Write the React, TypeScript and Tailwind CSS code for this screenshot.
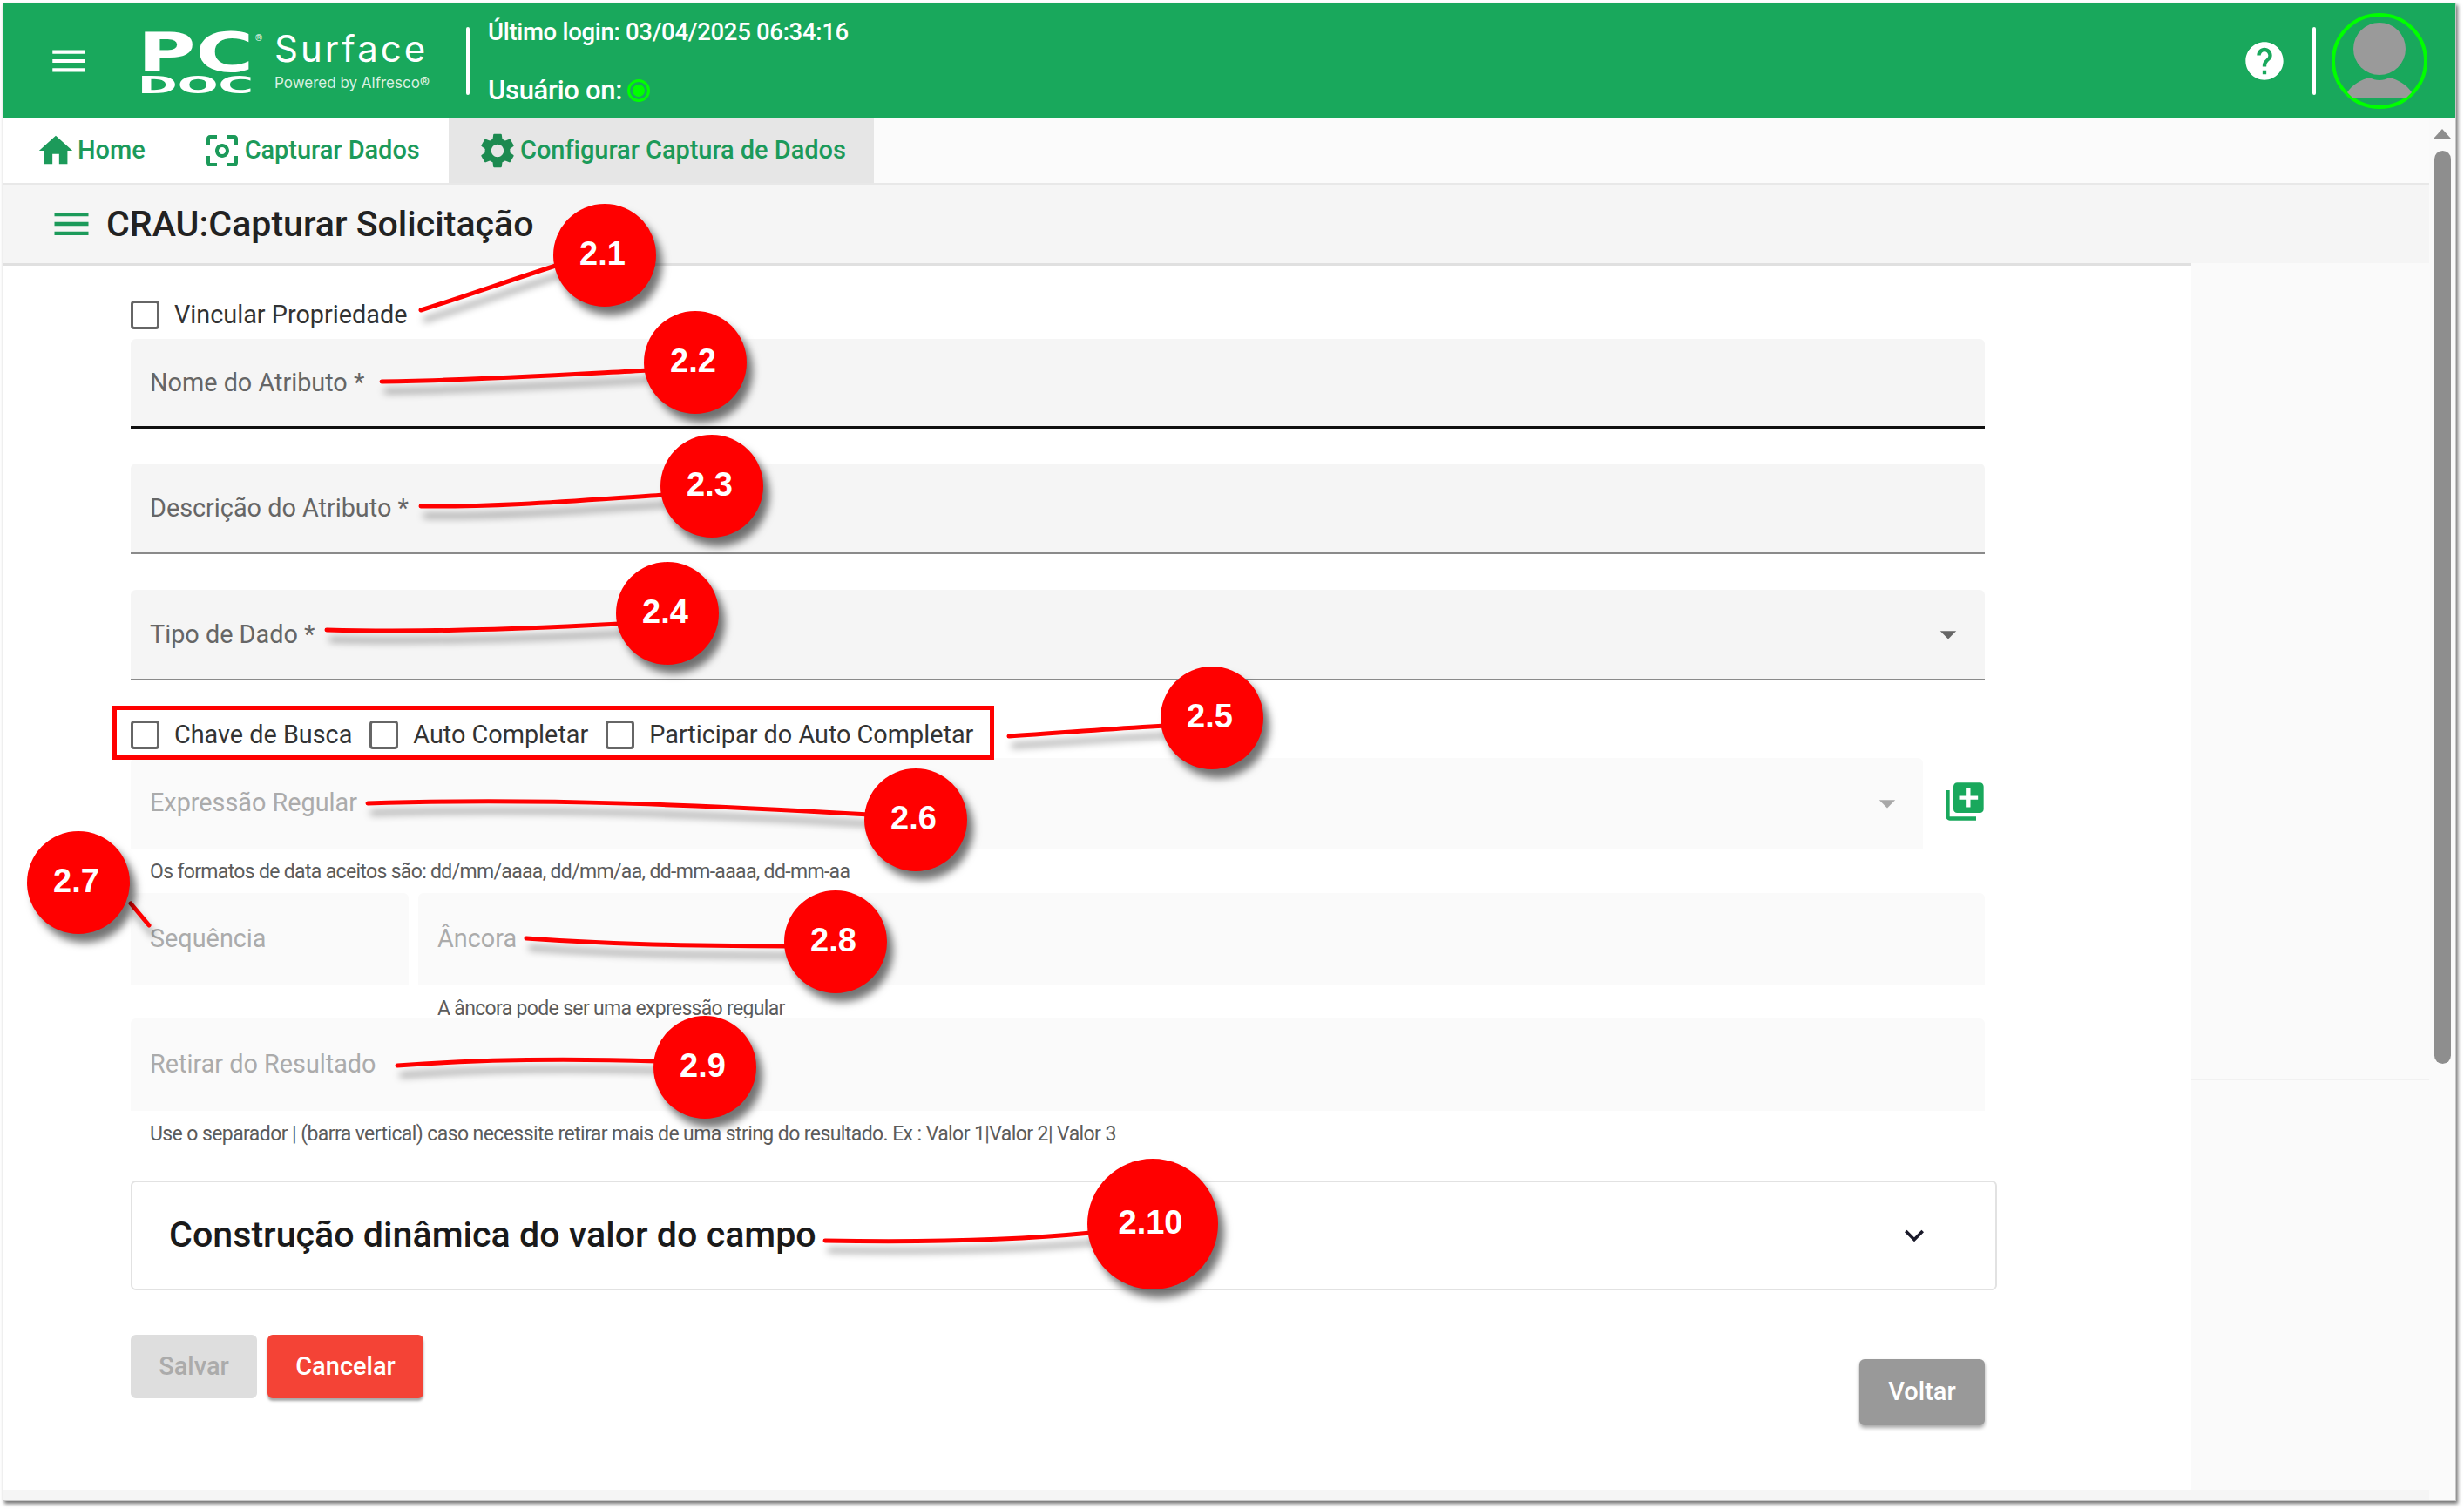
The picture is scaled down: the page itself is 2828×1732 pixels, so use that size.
import React from 'react';
import { MdArrowDropDown, MdCenterFocusWeak, MdExpandMore, MdHelp, MdHome, MdLibraryAdd, MdMenu, MdSettings } from 'react-icons/md';

const callouts = [
  { label: '2.1', box: 'left-[635px] top-[234px] w-[118px] h-[118px]' },
  { label: '2.2', box: 'left-[739px] top-[357px] w-[118px] h-[118px]' },
  { label: '2.3', box: 'left-[758px] top-[499px] w-[118px] h-[118px]' },
  { label: '2.4', box: 'left-[707px] top-[645px] w-[118px] h-[118px]' },
  { label: '2.5', box: 'left-[1332px] top-[765px] w-[118px] h-[118px]' },
  { label: '2.6', box: 'left-[992px] top-[882px] w-[118px] h-[118px]' },
  { label: '2.7', box: 'left-[31px] top-[954px] w-[118px] h-[118px]' },
  { label: '2.8', box: 'left-[900px] top-[1022px] w-[118px] h-[118px]' },
  { label: '2.9', box: 'left-[750px] top-[1166px] w-[118px] h-[118px]' },
  { label: '2.10', box: 'left-[1248px] top-[1330px] w-[150px] h-[150px]' },
];

const leaders = [
  'M483 356 C540 338 590 320 644 303',
  'M438 438 C560 436 650 430 745 425',
  'M483 581 C580 582 670 574 763 568',
  'M375 723 C480 726 600 722 711 716',
  'M1158 845 C1220 841 1280 836 1337 833',
  'M422 922 C620 915 820 925 998 935',
  'M150 1037 L171 1062',
  'M604 1077 C700 1084 800 1086 904 1086',
  'M456 1223 C560 1215 660 1215 754 1218',
  'M947 1424 C1060 1426 1160 1424 1252 1415',
];

const Field = ({ label, className, labelTone = 'pt-[2px] text-[#666666]', children }: { label: string; className: string; labelTone?: string; children?: React.ReactNode }) => (
  <div className={`flex items-center justify-between pl-[22px] rounded-t-[6px] ${className}`}>
    <span className={`text-[28.8px] ${labelTone}`}>{label}</span>
    {children}
  </div>
);

const Check = ({ label, className = '' }: { label: string; className?: string }) => (
  <label className={`flex items-center gap-[17px] ${className}`}>
    <span className="w-[33px] h-[33px] border-[3px] border-[#666666] rounded-[4px] bg-white" />
    <span className="text-[28.8px] text-[#333333]">{label}</span>
  </label>
);

const Hint = ({ text, className = '' }: { text: string; className?: string }) => (
  <div className={`h-[26px] leading-[26px] text-[23px] text-[#5c5c5c] ${className}`}>{text}</div>
);

const TabLabel = ({ children }: { children: React.ReactNode }) => (
  <span className="text-[29px] font-medium tracking-[-0.05px] text-[#1c9a5a]">{children}</span>
);

export default function App() {
  return (
    <div className="relative w-[2828px] h-[1732px] bg-white overflow-hidden font-['Roboto',sans-serif]">
      <div className="absolute left-[3px] top-[3px] w-[2816px] h-[1720px] flex flex-col border border-[#c8c8c8] shadow-[2px_3px_4px_rgba(0,0,0,0.55)] bg-white">
        {/* Header */}
        <header className="h-[131px] shrink-0 bg-[#19a85c] flex items-center text-white">
          <MdMenu className="ml-[50px] w-[50px] h-[50px]" />
          <div className="ml-[54px] w-[125px] h-[80px] relative font-['DejaVu_Sans',sans-serif] font-bold">
            <span className="absolute left-0 top-[7px] text-[63px] leading-[48px] origin-left scale-x-[1.44]">PC</span>
            <span className="absolute left-0 top-[58px] text-[27px] leading-[20px] origin-left scale-x-[2.04]">DOC</span>
            <span className="absolute left-[134px] top-[8px] text-[10px] leading-[12px] font-normal">®</span>
          </div>
          <div className="ml-[32px] mb-[3px] w-[190px] flex flex-col font-['Inter',sans-serif]">
            <span className="text-[42px] leading-[50px] tracking-[3px]">Surface</span>
            <span className="text-[17px] leading-[22px] mt-[3px] text-[#d8f0e2]">Powered by Alfresco®</span>
          </div>
          <div className="ml-[30px] w-[4px] h-[78px] bg-white rounded-full" />
          <div className="ml-[21px] h-full flex flex-col font-medium">
            <span className="mt-[13px] h-[40px] leading-[40px] text-[27.5px] tracking-[-0.3px]">Último login: 03/04/2025 06:34:16</span>
            <span className="mt-[24px] flex items-center gap-[6px] text-[31px] tracking-[-0.3px]">
              Usuário on:
              <span className="w-[26px] h-[26px] rounded-full border-[3px] border-[#00ff00] flex items-center justify-center">
                <span className="w-[14px] h-[14px] rounded-full bg-[#00ff00]" />
              </span>
            </span>
          </div>
          <div className="ml-auto flex items-center mr-[32px]">
            <MdHelp className="w-[52px] h-[52px]" />
            <div className="ml-[29px] w-[4px] h-[78px] bg-white rounded-full" />
            <svg viewBox="0 0 110 110" className="ml-[18px] w-[110px] h-[110px]">
              <circle cx="55" cy="55" r="53" fill="none" stroke="#00ff00" strokeWidth="4" />
              <circle cx="55" cy="41" r="30" fill="#9a9a9a" />
              <path d="M18 91 C24 82 34 76 44 74 C50 78 60 78 66 74 C76 76 86 82 92 91 L86 97 H24 Z" fill="#9a9a9a" />
            </svg>
          </div>
        </header>

        <div className="flex-1 flex min-h-0">
          <div className="w-[2784px] flex flex-col">
            {/* Tabs */}
            <nav className="h-[77px] shrink-0 bg-[#fbfbfb] border-b-[2px] border-[#e8e8e8] flex">
              <div className="w-[511px] bg-white flex items-center">
                <div className="ml-[37px] flex items-center gap-[2px]">
                  <MdHome className="w-[46px] h-[46px] text-[#1c9a5a]" />
                  <TabLabel>Home</TabLabel>
                </div>
                <div className="ml-[64px] flex items-center gap-[2px]">
                  <MdCenterFocusWeak className="w-[48px] h-[48px] text-[#1c9a5a]" />
                  <TabLabel>Capturar Dados</TabLabel>
                </div>
              </div>
              <div className="w-[488px] bg-[#e6e6e6] flex items-center pl-[32px] gap-[2px]">
                <MdSettings className="w-[48px] h-[48px] text-[#1c8a50]" />
                <TabLabel>Configurar Captura de Dados</TabLabel>
              </div>
            </nav>

            {/* Page title */}
            <div className="h-[90px] shrink-0 bg-[#f5f5f5] flex items-center">
              <MdMenu className="ml-[52px] w-[52px] h-[52px] text-[#1c9a5a]" />
              <h1 className="ml-[14px] pt-[2px] text-[41.1px] font-medium text-[#222222]">CRAU:Capturar Solicitação</h1>
            </div>

            <div className="flex-1 flex min-h-0">
              {/* Form */}
              <main className="w-[2511px] bg-white border-t-[3px] border-[#e0e0e0] pl-[146px] flex flex-col">
                <Check label="Vincular Propriedade" className="mt-[40px] h-[33px]" />
                <Field label="Nome do Atributo *" className="mt-[11px] w-[2128px] h-[103px] bg-[#f5f5f5] border-b-[3px] border-[#111111]" />
                <Field label="Descrição do Atributo *" className="mt-[40px] w-[2128px] h-[104px] bg-[#f5f5f5] border-b-[2px] border-[#8a8a8a]" />
                <Field label="Tipo de Dado *" className="mt-[41px] w-[2128px] h-[104px] bg-[#f5f5f5] border-b-[2px] border-[#8a8a8a]">
                  <MdArrowDropDown className="mr-[20px] w-[44px] h-[44px] text-[#666666]" />
                </Field>

                <div className="mt-[46px] h-[33px] flex items-center">
                  <Check label="Chave de Busca" />
                  <Check label="Auto Completar" className="ml-[20px]" />
                  <Check label="Participar do Auto Completar" className="ml-[20px]" />
                </div>

                <div className="mt-[10px] w-[2128px] flex items-center justify-between">
                  <Field label="Expressão Regular" labelTone="text-[#ababab]" className="w-[2057px] h-[104px] bg-[#fafafa]">
                    <MdArrowDropDown className="mr-[19px] w-[44px] h-[44px] text-[#a8a8a8]" />
                  </Field>
                  <MdLibraryAdd className="mb-[4px] mr-[-3px] w-[52px] h-[52px] text-[#19a85c]" />
                </div>
                <Hint text="Os formatos de data aceitos são: dd/mm/aaaa, dd/mm/aa, dd-mm-aaaa, dd-mm-aa" className="mt-[14px] ml-[22px] tracking-[-0.67px]" />

                <div className="mt-[11px] w-[2128px] flex gap-[11px]">
                  <Field label="Sequência" labelTone="text-[#ababab]" className="w-[319px] h-[106px] bg-[#fafafa]" />
                  <Field label="Âncora" labelTone="text-[#ababab]" className="flex-1 h-[106px] bg-[#fafafa]" />
                </div>
                <Hint text="A âncora pode ser uma expressão regular" className="mt-[14px] ml-[352px] tracking-[-0.67px]" />
                <Field label="Retirar do Resultado" labelTone="text-[#ababab]" className="mt-[-2px] w-[2128px] h-[106px] bg-[#fafafa]" />
                <Hint text="Use o separador | (barra vertical) caso necessite retirar mais de uma string do resultado. Ex : Valor 1|Valor 2| Valor 3" className="mt-[14px] ml-[22px] tracking-[-0.59px]" />

                <section className="mt-[40px] w-[2142px] h-[126px] border-[2px] border-[#e2e2e2] rounded-[6px] flex items-center justify-between pl-[42px] pr-[71px]">
                  <h2 className="text-[41.2px] font-medium text-[#1a1a1a]">Construção dinâmica do valor do campo</h2>
                  <MdExpandMore className="w-[44px] h-[44px] text-[#1a1a2a]" />
                </section>

                <div className="mt-[51px] w-[2128px] flex items-start justify-between">
                  <div className="flex gap-[12px]">
                    <button className="w-[145px] h-[73px] rounded-[6px] bg-[#dedede] text-[#ababab] text-[29px] font-medium">Salvar</button>
                    <button className="w-[179px] h-[73px] rounded-[6px] bg-[#f44336] text-white text-[29px] font-medium shadow-[0_3px_3px_rgba(0,0,0,0.35)]">Cancelar</button>
                  </div>
                  <button className="mt-[28px] w-[144px] h-[76px] rounded-[6px] bg-[#999999] text-white text-[29px] font-medium shadow-[0_3px_4px_rgba(0,0,0,0.35)]">Voltar</button>
                </div>
              </main>

              {/* Side panel */}
              <aside className="flex-1 bg-[#fafafa] flex flex-col">
                <div className="h-[938px] border-b-[2px] border-[#f1f1f1]" />
              </aside>
            </div>
            <div className="h-[12px] shrink-0 bg-[#f5f5f5]" />
          </div>

          {/* Scrollbar */}
          <div className="flex-1 bg-[#fafafa] flex flex-col items-center">
            <div className="mt-[13px] w-0 h-0 border-x-[10px] border-x-transparent border-b-[11px] border-b-[#8e8e8e]" />
            <div className="mt-[14px] w-[19px] h-[1048px] rounded-full bg-[#8e8e8e]" />
          </div>
        </div>
      </div>

      {/* Annotations drawn over the screenshot */}
      <div className="absolute left-[129px] top-[810px] w-[1012px] h-[62px] border-[5px] border-[#ff0000]" />
      <svg viewBox="0 0 2828 1732" className="absolute left-0 top-0 w-[2828px] h-[1732px] pointer-events-none drop-shadow-[5px_11px_4px_rgba(0,0,0,0.4)]">
        {leaders.map((d) => (
          <path key={d} d={d} fill="none" stroke="#ff0000" strokeWidth="5" strokeLinecap="round" />
        ))}
      </svg>
      {callouts.map((c) => (
        <div
          key={c.label}
          className={`absolute rounded-full bg-[#ff0000] flex items-center justify-center pr-[5px] pb-[3px] text-white text-[38px] font-bold font-['Liberation_Sans',sans-serif] shadow-[7px_10px_10px_rgba(0,0,0,0.55)] ${c.box}`}
        >
          {c.label}
        </div>
      ))}
    </div>
  );
}
